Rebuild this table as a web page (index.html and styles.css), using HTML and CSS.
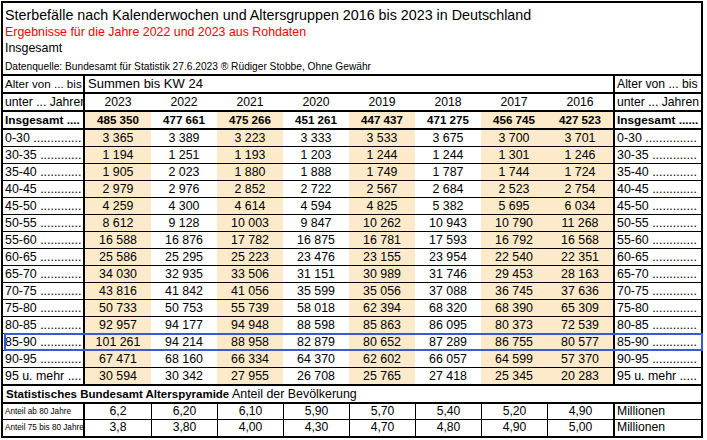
FILE: index.html
```html
<!DOCTYPE html>
<html lang="de">
<head>
<meta charset="utf-8">
<title>Sterbefälle nach Kalenderwochen und Altersgruppen</title>
<link rel="stylesheet" href="styles.css">
</head>
<body>
<div class="sheet">
  <div class="intro">
    <div class="title">Sterbefälle nach Kalenderwochen und Altersgruppen 2016 bis 2023 in Deutschland</div>
    <div class="subtitle">Ergebnisse für die Jahre 2022 und 2023 aus Rohdaten</div>
    <div class="scope">Insgesamt</div>
    <div class="source">Datenquelle: Bundesamt für Statistik 27.6.2023 ® Rüdiger Stobbe, Ohne Gewähr</div>
  </div>

  <div class="row thick head">
    <div class="lab narrow">Alter von ... bis</div>
    <div class="span">Summen bis KW 24</div>
    <div class="rlab">Alter von ... bis</div>
  </div>
  <div class="row thick head">
    <div class="lab">unter ... Jahren</div>
    <div class="num">2023</div><div class="num">2022</div><div class="num">2021</div><div class="num">2020</div>
    <div class="num">2019</div><div class="num">2018</div><div class="num">2017</div><div class="num">2016</div>
    <div class="rlab">unter ... Jahren</div>
  </div>
  <div class="row thick total tint">
    <div class="lab">Insgesamt ....</div>
    <div class="num">485 350</div><div class="num">477 661</div><div class="num">475 266</div><div class="num">451 261</div>
    <div class="num">447 437</div><div class="num">471 275</div><div class="num">456 745</div><div class="num">427 523</div>
    <div class="rlab">Insgesamt ......</div>
  </div>

  <div class="row tint">
    <div class="lab">0-30 ..............</div>
    <div class="num">3 365</div><div class="num">3 389</div><div class="num">3 223</div><div class="num">3 333</div>
    <div class="num">3 533</div><div class="num">3 675</div><div class="num">3 700</div><div class="num">3 701</div>
    <div class="rlab">0-30 ...............</div>
  </div>
  <div class="row tint">
    <div class="lab">30-35 ............</div>
    <div class="num">1 194</div><div class="num">1 251</div><div class="num">1 193</div><div class="num">1 203</div>
    <div class="num">1 244</div><div class="num">1 244</div><div class="num">1 301</div><div class="num">1 246</div>
    <div class="rlab">30-35 .............</div>
  </div>
  <div class="row tint">
    <div class="lab">35-40 ............</div>
    <div class="num">1 905</div><div class="num">2 023</div><div class="num">1 880</div><div class="num">1 888</div>
    <div class="num">1 749</div><div class="num">1 787</div><div class="num">1 744</div><div class="num">1 724</div>
    <div class="rlab">35-40 .............</div>
  </div>
  <div class="row tint">
    <div class="lab">40-45 ............</div>
    <div class="num">2 979</div><div class="num">2 976</div><div class="num">2 852</div><div class="num">2 722</div>
    <div class="num">2 567</div><div class="num">2 684</div><div class="num">2 523</div><div class="num">2 754</div>
    <div class="rlab">40-45 .............</div>
  </div>
  <div class="row tint">
    <div class="lab">45-50 ............</div>
    <div class="num">4 259</div><div class="num">4 300</div><div class="num">4 614</div><div class="num">4 594</div>
    <div class="num">4 825</div><div class="num">5 382</div><div class="num">5 695</div><div class="num">6 034</div>
    <div class="rlab">45-50 .............</div>
  </div>
  <div class="row tint">
    <div class="lab">50-55 ............</div>
    <div class="num">8 612</div><div class="num">9 128</div><div class="num">10 003</div><div class="num">9 847</div>
    <div class="num">10 262</div><div class="num">10 943</div><div class="num">10 790</div><div class="num">11 268</div>
    <div class="rlab">50-55 .............</div>
  </div>
  <div class="row tint">
    <div class="lab">55-60 ............</div>
    <div class="num">16 588</div><div class="num">16 876</div><div class="num">17 782</div><div class="num">16 875</div>
    <div class="num">16 781</div><div class="num">17 593</div><div class="num">16 792</div><div class="num">16 568</div>
    <div class="rlab">55-60 .............</div>
  </div>
  <div class="row tint">
    <div class="lab">60-65 ............</div>
    <div class="num">25 586</div><div class="num">25 295</div><div class="num">25 223</div><div class="num">23 476</div>
    <div class="num">23 155</div><div class="num">23 954</div><div class="num">22 540</div><div class="num">22 351</div>
    <div class="rlab">60-65 .............</div>
  </div>
  <div class="row tint">
    <div class="lab">65-70 ............</div>
    <div class="num">34 030</div><div class="num">32 935</div><div class="num">33 506</div><div class="num">31 151</div>
    <div class="num">30 989</div><div class="num">31 746</div><div class="num">29 453</div><div class="num">28 163</div>
    <div class="rlab">65-70 .............</div>
  </div>
  <div class="row tint">
    <div class="lab">70-75 ............</div>
    <div class="num">43 816</div><div class="num">41 842</div><div class="num">41 056</div><div class="num">35 599</div>
    <div class="num">35 056</div><div class="num">37 088</div><div class="num">36 745</div><div class="num">37 636</div>
    <div class="rlab">70-75 .............</div>
  </div>
  <div class="row tint">
    <div class="lab">75-80 ............</div>
    <div class="num">50 733</div><div class="num">50 753</div><div class="num">55 739</div><div class="num">58 018</div>
    <div class="num">62 394</div><div class="num">68 320</div><div class="num">68 390</div><div class="num">65 309</div>
    <div class="rlab">75-80 .............</div>
  </div>
  <div class="row tint">
    <div class="lab">80-85 ............</div>
    <div class="num">92 957</div><div class="num">94 177</div><div class="num">94 948</div><div class="num">88 598</div>
    <div class="num">85 863</div><div class="num">86 095</div><div class="num">80 373</div><div class="num">72 539</div>
    <div class="rlab">80-85 .............</div>
  </div>
  <div class="row tint">
    <div class="lab">85-90 ............</div>
    <div class="num">101 261</div><div class="num">94 214</div><div class="num">88 958</div><div class="num">82 879</div>
    <div class="num">80 652</div><div class="num">87 289</div><div class="num">86 755</div><div class="num">80 577</div>
    <div class="rlab">85-90 .............</div>
  </div>
  <div class="row tint">
    <div class="lab">90-95 ............</div>
    <div class="num">67 471</div><div class="num">68 160</div><div class="num">66 334</div><div class="num">64 370</div>
    <div class="num">62 602</div><div class="num">66 057</div><div class="num">64 599</div><div class="num">57 370</div>
    <div class="rlab">90-95 .............</div>
  </div>
  <div class="row thick tint">
    <div class="lab">95 u. mehr ....</div>
    <div class="num">30 594</div><div class="num">30 342</div><div class="num">27 955</div><div class="num">26 708</div>
    <div class="num">25 765</div><div class="num">27 418</div><div class="num">25 345</div><div class="num">20 283</div>
    <div class="rlab">95 u. mehr .....</div>
  </div>

  <div class="row thick stat">
    <div class="stat-text"><b>Statistisches Bundesamt Alterspyramide</b> Anteil der Bevölkerung</div>
  </div>
  <div class="row share">
    <div class="lab small">Anteil ab 80 Jahre</div>
    <div class="num">6,2</div><div class="num">6,20</div><div class="num">6,10</div><div class="num">5,90</div>
    <div class="num">5,70</div><div class="num">5,40</div><div class="num">5,20</div><div class="num">4,90</div>
    <div class="rlab">Millionen</div>
  </div>
  <div class="row share last">
    <div class="lab small">Anteil 75 bis 80 Jahre</div>
    <div class="num">3,8</div><div class="num">3,80</div><div class="num">4,00</div><div class="num">4,30</div>
    <div class="num">4,70</div><div class="num">4,80</div><div class="num">4,90</div><div class="num">5,00</div>
    <div class="rlab">Millionen</div>
  </div>

  <div class="selection"></div>
</div>
</body>
</html>
```

FILE: styles.css
```css
* {
  box-sizing: border-box;
}

html,
body {
  margin: 0;
  padding: 0;
  background: #ffffff;
}

body {
  font-family: "Liberation Sans", Arial, sans-serif;
  color: #000000;
}

.sheet {
  position: relative;
  width: 702px;
  height: 437px;
  margin: 1px 0 0 1px;
  border: 2px solid #000000;
}

/* ---------- intro block ---------- */
.intro {
  height: 73px;
  padding: 3px 0 0 2px;
  border-bottom: 2px solid #000000;
  white-space: nowrap;
}

.title {
  font-size: 14.3px;
  line-height: 18px;
}

.subtitle {
  margin-top: 1px;
  font-size: 12.4px;
  line-height: 15px;
  color: #ff0000;
}

.scope {
  margin-top: 1px;
  font-size: 12.4px;
  line-height: 15px;
}

.source {
  margin-top: 4px;
  font-size: 10.2px;
  line-height: 13px;
}

/* ---------- table rows ---------- */
.row {
  display: grid;
  grid-template-columns: 82px repeat(8, 66px) 88px;
  height: 17px;
  line-height: 16px;
  font-size: 12.4px;
  border-bottom: 1px solid #000000;
}

.row > div {
  white-space: nowrap;
  overflow: hidden;
}

.row.thick {
  height: 18px;
  border-bottom-width: 2px;
}

.lab {
  padding-left: 2px;
  border-right: 2px solid #000000;
}

.rlab {
  padding-left: 2px;
  border-left: 2px solid #000000;
}

.num {
  text-align: center;
}

.head {
  font-size: 12.2px;
}

.head .narrow {
  font-size: 11.6px;
}

.span {
  grid-column: 2 / 10;
  padding-left: 3px;
  font-size: 13px;
}

.total .lab,
.total .rlab {
  font-weight: bold;
  font-size: 11.8px;
}

.total .num {
  font-weight: bold;
  font-size: 11.6px;
}

/* alternating column fill */
.tint > :nth-child(2),
.tint > :nth-child(4),
.tint > :nth-child(6),
.tint > :nth-child(8),
.tint > :nth-child(9) {
  background: #fdeaca;
}

/* ---------- Bundesamt block ---------- */
.stat-text {
  grid-column: 1 / -1;
  padding-left: 3px;
  font-size: 12.4px;
}

.stat-text b {
  font-size: 11.5px;
}

.share {
  height: 16px;
  line-height: 15px;
  font-size: 12.2px;
}

.share.last {
  border-bottom: none;
}

.share .num + .num {
  border-left: 1px solid #000000;
}

.small {
  font-size: 8.2px;
}

/* ---------- selected row outline ---------- */
.selection {
  position: absolute;
  left: 1px;
  top: 330px;
  width: 699px;
  height: 18px;
  border: 2px solid #3a58dc;
  pointer-events: none;
}
```
